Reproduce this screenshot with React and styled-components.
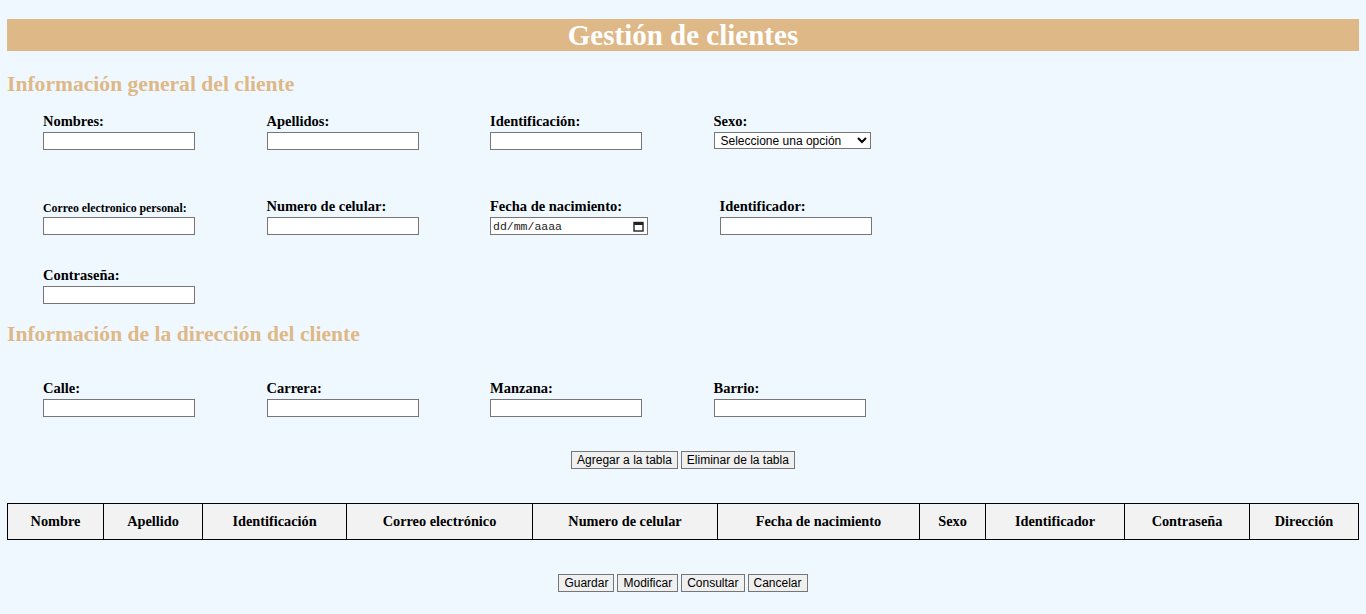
import React from 'react'
import styled, { createGlobalStyle } from 'styled-components'

const GlobalStyle = createGlobalStyle`
    body {
        margin: 8px 7px;
        background-color: #F0F8FF;
        font-family: "Liberation Serif", "Times New Roman", serif;
        color: black;
    }
`

const TitleBar = styled.h1`
    margin: 11px 0 0;
    height: 32px;
    line-height: 32px;
    background-color: #DEB887;
    color: white;
    text-align: center;
    font-size: 29px;
    font-weight: bold;
`

const SectionTitle = styled.h2`
    margin: ${props => props.$top}px 0 0;
    line-height: 24px;
    font-size: 21.6px;
    font-weight: bold;
    color: #DEB887;
`

const FieldRow = styled.div`
    display: grid;
    grid-template-columns: repeat(4, 223.5px);
    align-items: end;
    padding-left: 36px;
    margin-top: ${props => props.$top}px;
`

const Field = styled.div`
    display: flex;
    flex-direction: column;
    padding-left: ${props => props.$shift || 0}px;
`

const Label = styled.label`
    font-size: ${props => props.$small ? '11.8px' : '14.5px'};
    line-height: ${props => props.$small ? '14px' : '17px'};
    font-weight: bold;
    margin-bottom: 2px;
`

const TextInput = styled.input`
    box-sizing: border-box;
    width: 152px;
    height: 18px;
    border: 1px solid #767676;
    background: white;
    padding: 1px 2px;
    margin: 0;
`

const Select = styled.select`
    box-sizing: border-box;
    width: 157px;
    height: 17px;
    border: 1px solid #767676;
    border-radius: 0;
    background: white;
    font-family: "Liberation Sans", Arial, sans-serif;
    font-size: 12px;
    padding: 0 0 0 2px;
    margin: 0 0 1px;
`

const DateBox = styled.div`
    box-sizing: border-box;
    width: 158px;
    height: 18px;
    border: 1px solid #767676;
    background: white;
    display: flex;
    align-items: center;
    justify-content: space-between;
    padding: 0 3px 0 2px;
    font-family: "Liberation Mono", "DejaVu Sans Mono", monospace;
    font-size: 11.5px;
    color: #222;
`

const ButtonBar = styled.div`
    display: flex;
    justify-content: center;
    gap: 3px;
    margin-top: 34px;
`

const Button = styled.button`
    box-sizing: border-box;
    height: 18px;
    padding: 0 5px;
    border: 1px solid #767676;
    border-radius: 0;
    background-color: #EFEFEF;
    font-family: "Liberation Sans", Arial, sans-serif;
    font-size: 12px;
    line-height: 16px;
    color: black;
    cursor: pointer;
`

const Table = styled.table`
    width: 100%;
    margin-top: 34px;
    border-collapse: collapse;
    table-layout: fixed;
    border: 1px solid black;
`

const Th = styled.th`
    height: 35px;
    padding: 0;
    border: 1px solid black;
    background-color: #F2F2F2;
    font-size: 14.3px;
    font-weight: bold;
    text-align: center;
`

const columns = [
    ['Nombre', 96], ['Apellido', 99], ['Identificación', 144], ['Correo electrónico', 186],
    ['Numero de celular', 185], ['Fecha de nacimiento', 202], ['Sexo', 66],
    ['Identificador', 139], ['Contraseña', 125], ['Dirección']
]

const CalendarIcon = () => (
    <svg width="11" height="11" viewBox="0 0 11 11">
        <rect x="1" y="1.5" width="9" height="8.5" fill="none" stroke="#222" strokeWidth="1.4" />
        <rect x="1" y="1.5" width="9" height="2.5" fill="#222" />
    </svg>
)

const App = () => {
    return (
        <>
            <GlobalStyle />
            <TitleBar>Gestión de clientes</TitleBar>

            <SectionTitle $top={21}>Información general del cliente</SectionTitle>

            <FieldRow $top={17}>
                <Field><Label>Nombres:</Label><TextInput /></Field>
                <Field><Label>Apellidos:</Label><TextInput /></Field>
                <Field><Label>Identificación:</Label><TextInput /></Field>
                <Field>
                    <Label>Sexo:</Label>
                    <Select defaultValue="">
                        <option value="">Seleccione una opción</option>
                        <option>Masculino</option>
                        <option>Femenino</option>
                    </Select>
                </Field>
            </FieldRow>

            <FieldRow $top={48}>
                <Field><Label $small>Correo electronico personal:</Label><TextInput /></Field>
                <Field><Label>Numero de celular:</Label><TextInput /></Field>
                <Field>
                    <Label>Fecha de nacimiento:</Label>
                    <DateBox><span>dd/mm/aaaa</span><CalendarIcon /></DateBox>
                </Field>
                <Field $shift={6}><Label>Identificador:</Label><TextInput /></Field>
            </FieldRow>

            <FieldRow $top={32}>
                <Field><Label>Contraseña:</Label><TextInput /></Field>
            </FieldRow>

            <SectionTitle $top={18}>Información de la dirección del cliente</SectionTitle>

            <FieldRow $top={34}>
                <Field><Label>Calle:</Label><TextInput /></Field>
                <Field><Label>Carrera:</Label><TextInput /></Field>
                <Field><Label>Manzana:</Label><TextInput /></Field>
                <Field><Label>Barrio:</Label><TextInput /></Field>
            </FieldRow>

            <ButtonBar>
                <Button>Agregar a la tabla</Button>
                <Button>Eliminar de la tabla</Button>
            </ButtonBar>

            <Table>
                <colgroup>
                    {columns.map(([name, w]) => <col key={name} style={w ? { width: w } : undefined} />)}
                </colgroup>
                <thead>
                    <tr>
                        {columns.map(([name]) => <Th key={name}>{name}</Th>)}
                    </tr>
                </thead>
            </Table>

            <ButtonBar>
                <Button>Guardar</Button>
                <Button>Modificar</Button>
                <Button>Consultar</Button>
                <Button>Cancelar</Button>
            </ButtonBar>
        </>
    )
}

export default App
